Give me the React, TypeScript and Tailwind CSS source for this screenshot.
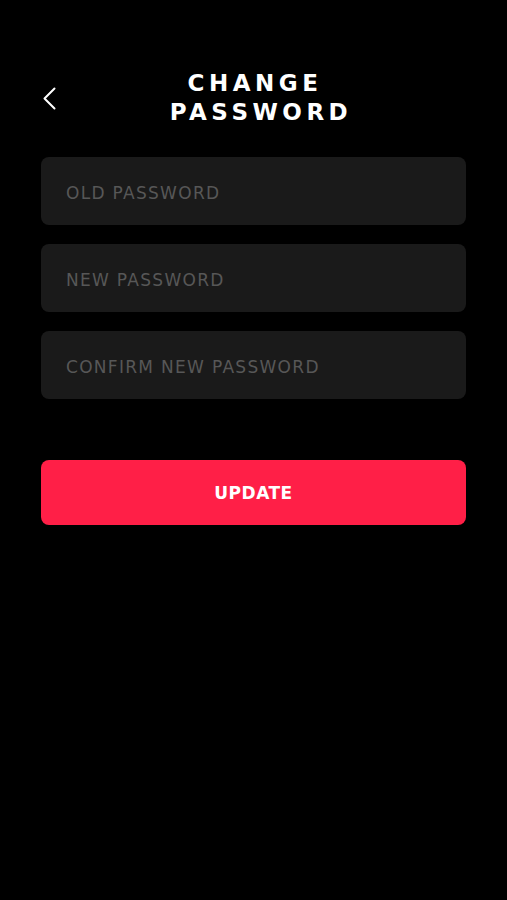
import { useState } from "react";

const fields = [
  { key: "old", placeholder: "OLD PASSWORD" },
  { key: "new", placeholder: "NEW PASSWORD" },
  { key: "confirm", placeholder: "CONFIRM NEW PASSWORD" },
];

export default function App() {
  const [values, setValues] = useState<Record<string, string>>({});

  return (
    <div className="min-h-[900px] w-full bg-black font-['DejaVu_Sans',sans-serif] text-white">
      <div className="px-[41px]">
        <div className="relative flex h-[157px] items-start justify-center pt-[69px]">
          <button className="absolute left-[2px] top-[87px] text-white">
            <svg width="13" height="23" viewBox="0 0 13 23" fill="none">
              <path
                d="M11.5 1.5 1.5 11.5l10 10"
                stroke="currentColor"
                strokeWidth={2}
                strokeLinecap="round"
                strokeLinejoin="round"
              />
            </svg>
          </button>
          <h1 className="text-center text-[23px] font-bold leading-[29px] tracking-[4.5px]">
            <span className="block pl-[3px]">CHANGE</span>
            <span className="block pl-[15px]">PASSWORD</span>
          </h1>
        </div>

        <div className="flex flex-col gap-[19px]">
          {fields.map((f) => (
            <input
              key={f.key}
              type="password"
              value={values[f.key] ?? ""}
              onChange={(e) => setValues({ ...values, [f.key]: e.target.value })}
              placeholder={f.placeholder}
              className="h-[68px] w-full rounded-[8px] bg-[#1a1a1a] px-[25px] pt-[4px] text-[17px] tracking-[1.3px] text-white outline-none placeholder:text-[#575757]"
            />
          ))}
        </div>

        <button className="mt-[61px] h-[65px] w-full rounded-[8px] bg-[#ff1f47] pt-[2px] text-[17px] font-bold tracking-[0.5px] text-white">
          UPDATE
        </button>
      </div>
    </div>
  );
}
